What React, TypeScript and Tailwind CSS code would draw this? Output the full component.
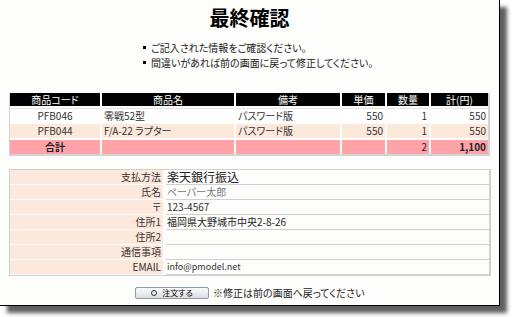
const jp = "font-['Noto_Sans_CJK_JP','Liberation_Sans',sans-serif] [font-feature-settings:'palt']";

type Item = { code: string; name: string; note: string; price: string; qty: string; sum: string };

const items: Item[] = [
  { code: 'PFB046', name: '零戦52型', note: 'パスワード版', price: '550', qty: '1', sum: '550' },
  { code: 'PFB044', name: 'F/A-22 ラプター', note: 'パスワード版', price: '550', qty: '1', sum: '550' },
];

const info: [string, string, string][] = [
  ['支払方法', '楽天銀行振込', 'text-[12px] text-[#222]'],
  ['氏名', 'ペーパー太郎', 'text-[10px] text-[#777]'],
  ['〒', '123-4567', 'text-[10px] text-[#333]'],
  ['住所1', '福岡県大野城市中央2-8-26', 'text-[10px] text-[#222]'],
  ['住所2', '', ''],
  ['通信事項', '', ''],
  ['EMAIL', 'info@pmodel.net', 'text-[9px] text-[#333]'],
];

const cols = 'grid grid-cols-[90px_132px_104px_43px_42px_57px] gap-x-[2px]';

function OrderTable() {
  return (
    <div className="ml-[9px] w-[481px] border-l border-b-2 border-r-2 border-[#d4d4d4]">
      <div className={`${cols} h-[13px] text-[10px] leading-[13px] text-white`}>
        {['商品コード', '商品名', '備考', '単価', '数量', '計(円)'].map((h) => (
          <div key={h} className="bg-black text-center">
            {h}
          </div>
        ))}
      </div>
      {items.map((it, i) => (
        <div
          key={it.code}
          className={`${cols} mt-[2px] h-[14px] text-[10px] leading-[14px] text-[#333] ${i === 1 ? '[&>div]:bg-[#fde8dc]' : '[&>div]:bg-white [&>div]:border-t [&>div]:border-[#e2e2e2]'}`}
        >
          <div className="text-center">{it.code}</div>
          <div className="pl-[2px]">{it.name}</div>
          <div className="pl-[2px]">{it.note}</div>
          <div className="pr-[2px] text-right">{it.price}</div>
          <div className="pr-[2px] text-right">{it.qty}</div>
          <div className="pr-[2px] text-right">{it.sum}</div>
        </div>
      ))}
      <div className={`${cols} mt-[2px] h-[14px] text-[10px] leading-[14px] text-[#222] [&>div]:bg-[#ffa3a8]`}>
        <div className="text-center font-bold">合計</div>
        <div />
        <div />
        <div />
        <div className="pr-[2px] text-right">2</div>
        <div className="pr-[2px] text-right font-bold">1,100</div>
      </div>
    </div>
  );
}

function InfoTable() {
  return (
    <div className="ml-[9px] mt-[13px] w-[482px] border border-r-2 border-[#cfcfcf]">
      {info.map(([label, value, style]) => (
        <div key={label} className="flex h-[15px]">
          <div className="w-[153px] border-b border-white bg-[#fde8dc] pr-[2px] text-right text-[10px] leading-[14px] text-[#333]">
            {label}
          </div>
          <div className={`ml-[3px] flex-1 border-b border-[#d0d0d0] pl-[1px] leading-[14px] ${style}`}>{value}</div>
        </div>
      ))}
    </div>
  );
}

export default function App() {
  return (
    <div className={`relative h-[317px] w-[512px] overflow-hidden bg-white ${jp}`}>
      <div className="h-[306px] w-[500px] border-b border-r border-black bg-[#fdfdfc] shadow-[7px_7px_4px_#5f5f5f]">
        <h1 className="pt-[6px] text-center text-[20px] font-bold leading-[24px] text-black">最終確認</h1>

        <ul className="ml-[143px] mt-[10px] text-[10px] leading-[15px] text-[#222]">
          <li className="flex items-center gap-[5px]">
            <span className="h-[3px] w-[3px] bg-black" />
            ご記入された情報をご確認ください。
          </li>
          <li className="flex items-center gap-[5px]">
            <span className="h-[3px] w-[3px] bg-black" />
            間違いがあれば前の画面に戻って修正してください。
          </li>
        </ul>

        <div className="mt-[23px]">
          <OrderTable />
        </div>

        <InfoTable />

        <div className="ml-[135px] mt-[10px] flex items-center gap-[4px]">
          <button
            type="button"
            className="flex h-[12px] w-[74px] items-center justify-center gap-[5px] rounded-[2px] border border-[#8a9ab0] bg-gradient-to-b from-[#fafafa] to-[#dedede] text-[8px] leading-none text-black"
          >
            <span className="h-[6px] w-[6px] rounded-full border border-[#333]" />
            注文する
          </button>
          <span className="text-[10px] leading-[13px] text-[#222]">※修正は前の画面へ戻ってください</span>
        </div>
      </div>
    </div>
  );
}
